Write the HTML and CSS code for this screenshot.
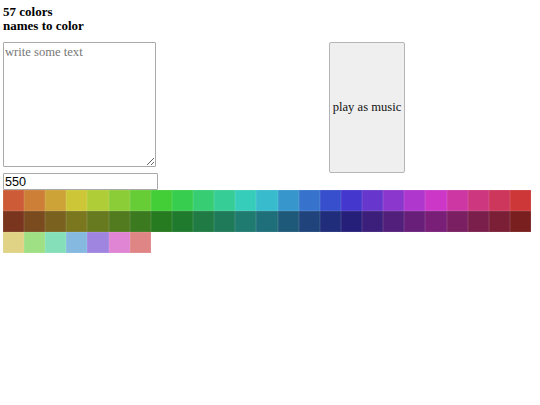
FILE: index.html
```html
<!DOCTYPE html>
<html>
<head>
<meta charset="utf-8">
<link rel="stylesheet" href="styles.css">
</head>
<body>
<div class="title">57 colors<br>names to color</div>
<div class="row">
  <textarea class="text" placeholder="write some text"></textarea>
  <button class="play">play as music</button>
</div>
<input class="num" type="text" value="550">
<div class="swatches">
  <div class="sw" style="background:hsl(14.4,60%,51%)"></div>
  <div class="sw" style="background:hsl(28.8,60%,51%)"></div>
  <div class="sw" style="background:hsl(43.2,60%,51%)"></div>
  <div class="sw" style="background:hsl(57.6,60%,51%)"></div>
  <div class="sw" style="background:hsl(72,60%,51%)"></div>
  <div class="sw" style="background:hsl(86.4,60%,51%)"></div>
  <div class="sw" style="background:hsl(100.8,60%,51%)"></div>
  <div class="sw" style="background:hsl(115.2,60%,51%)"></div>
  <div class="sw" style="background:hsl(129.6,60%,51%)"></div>
  <div class="sw" style="background:hsl(144,60%,51%)"></div>
  <div class="sw" style="background:hsl(158.4,60%,51%)"></div>
  <div class="sw" style="background:hsl(172.8,60%,51%)"></div>
  <div class="sw" style="background:hsl(187.2,60%,51%)"></div>
  <div class="sw" style="background:hsl(201.6,60%,51%)"></div>
  <div class="sw" style="background:hsl(216,60%,51%)"></div>
  <div class="sw" style="background:hsl(230.4,60%,51%)"></div>
  <div class="sw" style="background:hsl(244.8,60%,51%)"></div>
  <div class="sw" style="background:hsl(259.2,60%,51%)"></div>
  <div class="sw" style="background:hsl(273.6,60%,51%)"></div>
  <div class="sw" style="background:hsl(288,60%,51%)"></div>
  <div class="sw" style="background:hsl(302.4,60%,51%)"></div>
  <div class="sw" style="background:hsl(316.8,60%,51%)"></div>
  <div class="sw" style="background:hsl(331.2,60%,51%)"></div>
  <div class="sw" style="background:hsl(345.6,60%,51%)"></div>
  <div class="sw" style="background:hsl(360,60%,51%)"></div>
  <div class="sw" style="background:hsl(14.4,60%,30%)"></div>
  <div class="sw" style="background:hsl(28.8,60%,30%)"></div>
  <div class="sw" style="background:hsl(43.2,60%,30%)"></div>
  <div class="sw" style="background:hsl(57.6,60%,30%)"></div>
  <div class="sw" style="background:hsl(72,60%,30%)"></div>
  <div class="sw" style="background:hsl(86.4,60%,30%)"></div>
  <div class="sw" style="background:hsl(100.8,60%,30%)"></div>
  <div class="sw" style="background:hsl(115.2,60%,30%)"></div>
  <div class="sw" style="background:hsl(129.6,60%,30%)"></div>
  <div class="sw" style="background:hsl(144,60%,30%)"></div>
  <div class="sw" style="background:hsl(158.4,60%,30%)"></div>
  <div class="sw" style="background:hsl(172.8,60%,30%)"></div>
  <div class="sw" style="background:hsl(187.2,60%,30%)"></div>
  <div class="sw" style="background:hsl(201.6,60%,30%)"></div>
  <div class="sw" style="background:hsl(216,60%,30%)"></div>
  <div class="sw" style="background:hsl(230.4,60%,30%)"></div>
  <div class="sw" style="background:hsl(244.8,60%,30%)"></div>
  <div class="sw" style="background:hsl(259.2,60%,30%)"></div>
  <div class="sw" style="background:hsl(273.6,60%,30%)"></div>
  <div class="sw" style="background:hsl(288,60%,30%)"></div>
  <div class="sw" style="background:hsl(302.4,60%,30%)"></div>
  <div class="sw" style="background:hsl(316.8,60%,30%)"></div>
  <div class="sw" style="background:hsl(331.2,60%,30%)"></div>
  <div class="sw" style="background:hsl(345.6,60%,30%)"></div>
  <div class="sw" style="background:hsl(360,60%,30%)"></div>
  <div class="sw" style="background:hsl(51.4,60%,70%)"></div>
  <div class="sw" style="background:hsl(102.9,60%,70%)"></div>
  <div class="sw" style="background:hsl(154.3,60%,70%)"></div>
  <div class="sw" style="background:hsl(205.7,60%,70%)"></div>
  <div class="sw" style="background:hsl(257.1,60%,70%)"></div>
  <div class="sw" style="background:hsl(308.6,60%,70%)"></div>
  <div class="sw" style="background:hsl(360,60%,70%)"></div>
</div>
</body>
</html>
```
FILE: styles.css
```css
html, body {
  background: #fff;
}
body {
  margin: 3px;
  font-family: "Liberation Serif", serif;
  color: #000;
}
.title {
  font-size: 13px;
  font-weight: bold;
  line-height: 14px;
  padding-top: 2px;
  height: 30px;
  box-sizing: border-box;
}
.row {
  display: flex;
  align-items: flex-start;
  margin-top: 9px;
}
.text {
  width: 153px;
  height: 125px;
  box-sizing: border-box;
  margin: 0;
  padding: 2px 1px;
  border: 1px solid #a9a9a9;
  border-radius: 1px;
  font-family: "Liberation Serif", serif;
  font-size: 12.6px;
  line-height: 14px;
  resize: both;
}
.text::placeholder {
  color: #777;
}
.play {
  margin: 0 0 0 173px;
  width: 76px;
  height: 131px;
  box-sizing: border-box;
  padding: 0;
  background: #efefef;
  border: 1px solid #b5b5b5;
  border-radius: 2px;
  font-family: "Liberation Serif", serif;
  font-size: 12.6px;
  color: #111;
}
.num {
  display: block;
  margin: 0;
  width: 155px;
  height: 17px;
  box-sizing: border-box;
  padding: 0 1px;
  border: 1px solid #a9a9a9;
  border-radius: 1px;
  font-family: "Liberation Sans", sans-serif;
  font-size: 12.6px;
  color: #000;
}
.swatches {
  display: grid;
  width: 528px;
  grid-template-columns: repeat(25, 1fr);
  grid-auto-rows: 21px;
}
.sw {
  box-shadow: inset 0 0 0 0.5px rgba(255,255,255,0.15);
}
```
